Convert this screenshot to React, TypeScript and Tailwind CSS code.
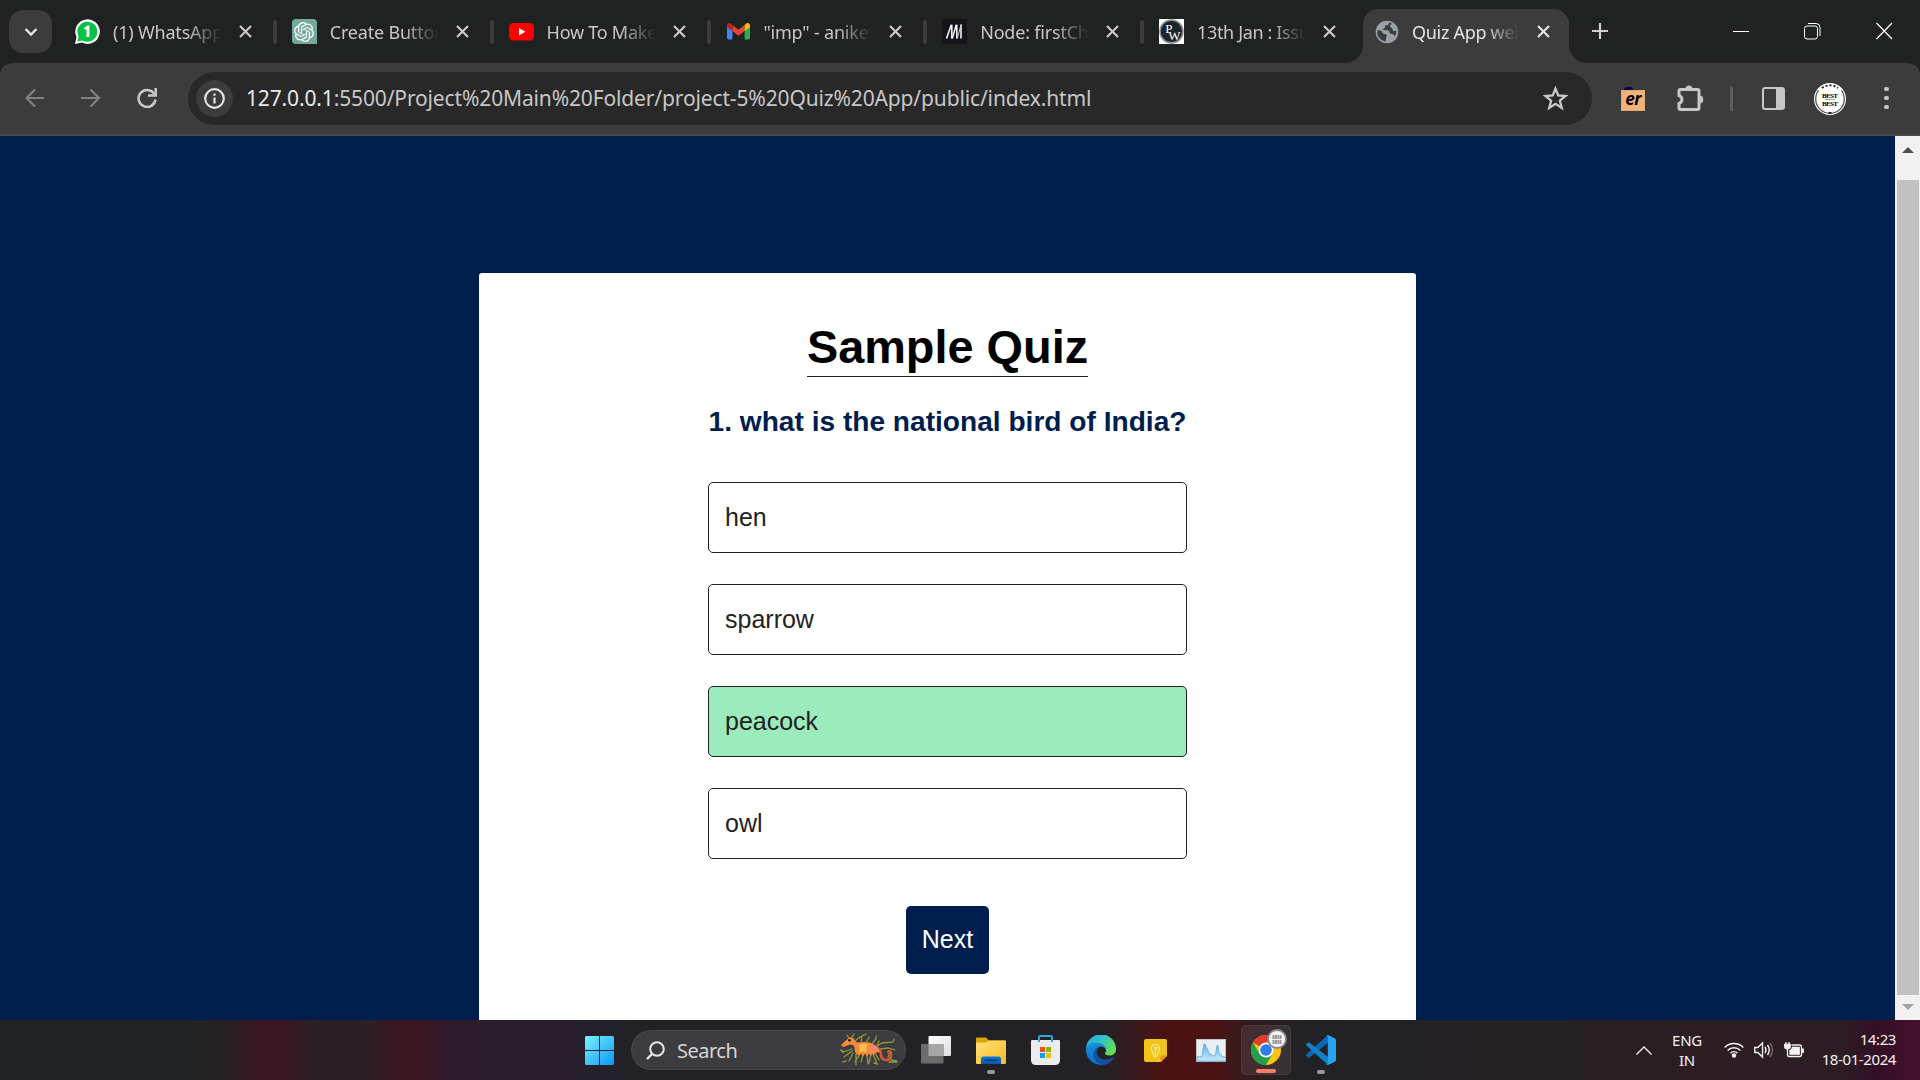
import React from "react";
import { SiOpenai } from "react-icons/si";

type Tab = { title: string; icon: React.ReactNode; spacing: string };

const WhatsAppIcon = () => (
  <svg viewBox="0 0 25 25" className="size-[25px]">
    <path d="M0 25 1.5 18A12.3 12.3 0 1 1 7 23.6Z" fill="#fff" />
    <path d="M2.4 22.6 3.6 17.6A10 10 0 1 1 7.4 21.4Z" fill="#08c146" />
    <path d="M9.3 8.8 12.4 6.6h2V18h-2.9V9.900l-2.2.9Z" fill="#fff" />
  </svg>
);

const ChatIcon = () => (
  <div className="flex size-[25px] items-center justify-center rounded-[4px] rounded-br-none bg-[#75a99c]">
    <SiOpenai className="size-[20px] text-white" />
  </div>
);

const YouTubeIcon = () => (
  <svg viewBox="0 0 25 25" className="size-[25px]">
    <rect y="4" width="25" height="17.5" rx="4.5" fill="#f00" />
    <path d="M10 9v7.400l6.300-3.700Z" fill="#fff" />
  </svg>
);

const GmailIcon = () => (
  <svg viewBox="0 0 25 25" className="ml-px size-[25px]">
    <path d="M1 7v11.500q0 2 2 2h3.400V9.500Z" fill="#4285f4" />
    <path d="M18.600 9.500v11H22q2 0 2-2V7Z" fill="#34a853" />
    <path d="M6.400 6 12.500 10.800 18.600 6v6L12.500 16.700 6.400 12Z" fill="#ea4335" />
    <path d="M1 6.800Q1 4 3.600 4q1 0 2.800 2v6L1 8.300Z" fill="#c5221f" />
    <path d="M24 6.800Q24 4 21.400 4q-1 0-2.800 2v6L24 8.300Z" fill="#fbbc04" />
  </svg>
);

const MdnIcon = () => (
  <svg viewBox="0 0 25 25" className="size-[25px]">
    <rect width="25" height="25" fill="#15141a" />
    <path d="M4.500 19.500 9.300 5.800M14.300 5.800 10.200 19.500" stroke="#fff" strokeWidth="1.500" />
    <path d="M9.800 5.800v13.700M14.800 5.800v13.700M19 5.500v14" stroke="#fff" strokeWidth="1.500" />
    <path d="m15.300 19.500 3.700-13.700" stroke="#d5d5d5" strokeWidth="1" />
  </svg>
);

const PwIcon = () => (
  <svg viewBox="0 0 25 25" className="size-[25px]">
    <rect width="25" height="25" fill="#fff" />
    <circle cx="12.500" cy="12.500" r="11.400" fill="#1d2429" stroke="#8b8f92" strokeWidth="1.600" />
    <text x="6.300" y="13.800" fontSize="13" fill="#fff" fontFamily="Liberation Serif, serif">P</text>
    <text x="9.300" y="21" fontSize="13" fill="#fff" fontFamily="Liberation Serif, serif">W</text>
  </svg>
);

const GlobeIcon = () => (
  <svg viewBox="0 0 24 24" className="size-[24px]">
    <circle cx="12" cy="12" r="11.300" fill="#9aa0a6" />
    <path
      d="M2.500 10.200c2.600.2 3.800.2 4.600 1.600.9 1.300.3 2.200 2 2.200 1.500.1 2.800.4 2.800 1.800s-1 1.300-1 2.600v3c-4.700-.5-8.200-4.100-8.700-8.600ZM14 2.600c-.1 1.700-.4 2.600-2.100 2.700-1.700 0-2 .6-2 1.900s-1 1.500-2.200 1.500c0 1.500 1.300 1.600 3.500 1.600s3 .6 3.200 2c.2 1.200 1.100 1.600 2.500 1.600 1.700 0 2.500.9 2.300 2.400 1.600-1.200 2.400-3.500 2.300-5.500-1.500.6-3.200.5-3.800-.8-.5-1.200-.1-2-1.400-2.200-1.500-.3-1.700-1.900-.7-2.700.8-.7 1-1.200.7-2Z"
      fill="#3c3c3c"
    />
  </svg>
);

const CloseIcon = ({ className }: { className: string }) => (
  <svg viewBox="0 0 13 13" className={"size-[13px] shrink-0 " + className}>
    <path d="m1 1 11 11M12 1 1 12" stroke="currentColor" strokeWidth="2.2" />
  </svg>
);

const tabs: Tab[] = [
  { title: "(1) WhatsApp", icon: <WhatsAppIcon />, spacing: "tracking-[-0.2px]" },
  { title: "Create Button", icon: <ChatIcon />, spacing: "tracking-[-0.2px]" },
  { title: "How To Make", icon: <YouTubeIcon />, spacing: "tracking-[-0.25px]" },
  { title: "\"imp\" - aniket", icon: <GmailIcon />, spacing: "tracking-[-0.2px]" },
  { title: "Node: firstChild", icon: <MdnIcon />, spacing: "tracking-[-0.2px]" },
  { title: "13th Jan : Issue", icon: <PwIcon />, spacing: "tracking-[-0.35px]" },
];

const TabTitle = ({ title, className }: { title: string; className: string }) => (
  <div
    className={
      "ml-[13px] overflow-hidden text-[18px] leading-[30px] whitespace-nowrap [mask-image:linear-gradient(to_right,black_68%,transparent_100%)] " +
      className
    }
  >
    {title}
  </div>
);

const TabStrip = () => (
  <div className="flex h-[63px] bg-[#1f2221]">
    <div className="mt-[10px] ml-[9px] flex size-[43px] items-center justify-center rounded-[14px] bg-[#3c3c3c]">
      <svg viewBox="0 0 14 10" className="h-[10px] w-[14px]">
        <path d="m1.500 2 5.500 5.500L12.500 2" fill="none" stroke="#e8e8e8" strokeWidth="2.400" />
      </svg>
    </div>
    <div className="ml-[8px] flex w-[1302px]">
      {tabs.map((t, i) => (
        <div key={t.title} className="flex h-[63px] w-[216.8px] shrink-0 items-center pl-[15px]">
          <div className="w-[25px] shrink-0">{t.icon}</div>
          <TabTitle title={t.title} className={"w-[109px] shrink-0 text-[#c7c8c7] " + t.spacing} />
          <CloseIcon className="ml-[17px] text-[#c9cac9]" />
          {i < 5 && <div className="ml-[21px] h-[24px] w-[4px] shrink-0 rounded-full bg-[#3c3c3c]" />}
        </div>
      ))}
    </div>
    <div className="relative mt-[9px] ml-px flex h-[54px] w-[206px] items-center rounded-t-[15px] bg-[#3c3c3c] pb-[9px] pl-[12px]">
      <svg viewBox="0 0 18 18" className="absolute bottom-0 -left-[18px] size-[18px]">
        <path d="M18 0A18 18 0 0 1 0 18H18Z" fill="#3c3c3c" />
      </svg>
      <svg viewBox="0 0 18 18" className="absolute -right-[18px] bottom-0 size-[18px]">
        <path d="M0 0A18 18 0 0 0 18 18H0Z" fill="#3c3c3c" />
      </svg>
      <GlobeIcon />
      <TabTitle title="Quiz App web" className="w-[107px] tracking-[-0.3px] text-[#e3e3e3]" />
      <CloseIcon className="ml-[18px] text-[#e3e3e3]" />
    </div>
    <svg viewBox="0 0 16 16" className="mt-[23px] ml-[23px] size-[16px]">
      <path d="M8 0v16M0 8h16" stroke="#cfcfcf" strokeWidth="2.200" />
    </svg>
    <div className="mt-[22px] mr-[27px] ml-auto flex h-[18px] gap-[55px]">
      <svg viewBox="0 0 17 18" className="h-[18px] w-[17px]">
        <path d="M1 9.500h16" stroke="#fff" />
      </svg>
      <svg viewBox="0 0 17 18" className="h-[18px] w-[17px]" fill="none" stroke="#fff">
        <rect x=".5" y="4" width="13" height="13" rx="2.500" />
        <path d="M4 1.500h8q4 0 4 4v8.500" />
      </svg>
      <svg viewBox="0 0 17 18" className="h-[18px] w-[17px]">
        <path d="m.5 1 15.500 16M16 1 .5 17" stroke="#fff" strokeWidth="1.200" />
      </svg>
    </div>
  </div>
);

const Toolbar = () => (
  <div className="bg-[#1f2221]">
    <div className="flex h-[73px] items-center rounded-t-[12px] border-b-2 border-[#474947] bg-[#3c3c3c] pl-[25px]">
      <svg viewBox="0 0 20 20" className="-mt-px size-[20px]" fill="none" stroke="#818181" strokeWidth="2.200">
        <path d="M19 10H2M10 1.500 1.500 10l8.500 8.500" />
      </svg>
      <svg viewBox="0 0 20 20" className="-mt-px ml-[36px] size-[20px]" fill="none" stroke="#818181" strokeWidth="2.200">
        <path d="M0 10H17.500M9.500 1.500l8.500 8.500-8.500 8.500" />
      </svg>
      <svg viewBox="0 0 20 20" className="-mt-px ml-[36px] size-[20px]" fill="none" stroke="#c9c9c9" strokeWidth="2.500">
        <path d="M17.200 5.800A8.500 8.500 0 1 0 18.500 11.500" />
        <path d="M18.700 0v7.500H11" />
      </svg>
      <div className="ml-[31px] flex h-[53px] w-[1404px] items-center rounded-full bg-[#282828] pl-[8px]">
        <div className="flex size-[37px] items-center justify-center rounded-full bg-[#3c3c3c]">
          <svg viewBox="0 0 21 21" className="size-[21px]" fill="none" stroke="#e3e3e3">
            <circle cx="10.500" cy="10.500" r="9.300" strokeWidth="2.200" />
            <path d="M10.500 9.500v6M10.500 5.500v2.300" strokeWidth="2.200" />
          </svg>
        </div>
        <div className="-mt-[2px] ml-[13px] text-[21px] leading-[30px] tracking-[-0.14px] whitespace-nowrap text-[#c7c7c7]">
          <span className="text-[#e8e8e8]">127.0.0.1</span>:5500/Project%20Main%20Folder/project-5%20Quiz%20App/public/index.html
        </div>
        <svg viewBox="0 0 24 24" className="mr-[24px] ml-auto size-[25px]" fill="none" stroke="#c9c9c9" strokeWidth="2.200">
          <path d="m12 2.500 2.600 6.600 7.100.5-5.500 4.500 1.800 6.900-6-3.900-6 3.900 1.800-6.900L2.300 9.600l7.100-.5Z" />
        </svg>
      </div>
      <div className="ml-[29px] flex size-[24px] flex-col">
        <div className="ml-[3px] h-[3px] w-[9px] rounded-t-full bg-[#08004f]" />
        <div className="flex h-[21px] items-center justify-center border border-[#e0a873] bg-[#f3b27c] text-[17px] leading-[18px] font-bold tracking-[-0.500px] text-black italic">
          <span className="-mt-[3px]">er</span>
        </div>
      </div>
      <svg viewBox="0 0 28 28" className="-mt-[2px] ml-[32px] size-[28px]">
        <path
          d="M3.500 5.500H20.500q1.500 0 1.500 1.500V24q0 1.500-1.500 1.500H3.500Q2 25.500 2 24v-4.500q3-1.200 3-4T2 11.500V7q0-1.500 1.500-1.500Z"
          fill="none"
          stroke="#c7c7c7"
          strokeWidth="3"
        />
        <path d="M8.500 5a3.500 3.500 0 0 1 7 0ZM22.500 11.500a3.800 4 0 0 1 0 8Z" fill="#c7c7c7" />
      </svg>
      <div className="ml-[25px] h-[25px] w-[3px] rounded-full bg-[#5e5e5e]" />
      <div className="ml-[29px] flex h-[23px] w-[23px] justify-end rounded-[3px] border-[2.500px] border-[#c7c7c7]">
        <div className="h-full w-[7px] bg-[#c7c7c7]" />
      </div>
      <svg viewBox="0 0 34 34" className="ml-[28px] size-[34px]">
        <circle cx="17" cy="17" r="16" fill="#fff" />
        <circle cx="17" cy="17" r="14.300" fill="none" stroke="#555" strokeWidth="1.300" />
        <path d="M7 9.500a13 13 0 0 1 20 0" stroke="#fff" strokeWidth="6.500" fill="none" />
        <path d="M9 6a13.500 13.500 0 0 1 16 0" stroke="#222" strokeWidth="2" strokeDasharray="2 2" fill="none" />
        <path d="M15.500 31h3" stroke="#222" strokeWidth="2" />
        <text x="17" y="15.800" fontSize="7" fontWeight="bold" textAnchor="middle" fontFamily="Liberation Serif, serif" textLength="16">BEST</text>
        <text x="17" y="23.800" fontSize="7" fontWeight="bold" textAnchor="middle" fontFamily="Liberation Serif, serif" textLength="16">BEST</text>
        <path d="M12 17.500h10" stroke="#999" />
      </svg>
      <div className="-mt-px ml-[37px] flex flex-col gap-[4.500px]">
        <div className="size-[4.500px] rounded-full bg-[#c7c7c7]" />
        <div className="size-[4.500px] rounded-full bg-[#c7c7c7]" />
        <div className="size-[4.500px] rounded-full bg-[#c7c7c7]" />
      </div>
    </div>
  </div>
);

const options = ["hen", "sparrow", "peacock", "owl"];

const Quiz = () => (
  <div className="flex h-[884px] bg-[#001e4d] font-['Liberation_Sans',sans-serif]">
    <div className="flex flex-1 justify-center pt-[137px]">
      <div className="flex h-[747px] w-[937px] flex-col items-center rounded-t-[3px] bg-white pt-[47px]">
        <h1 className="h-[57px] border-b border-[#1a1f2b] text-[46.875px] leading-[54px] font-bold text-black">Sample Quiz</h1>
        <h2 className="mt-[29px] text-[28.125px] leading-[32px] font-bold whitespace-nowrap text-[#001e4d]">
          1. what is the national bird of India?
        </h2>
        <div className="mt-[44px] flex w-[479px] flex-col gap-[31px]">
          {options.map((o) => (
            <div
              key={o}
              className={
                "flex h-[71px] items-center rounded-[5px] border border-[#222] px-[16px] text-[25px] leading-[29px] text-[#222] " +
                (o === "peacock" ? "bg-[#9cebbc]" : "bg-white")
              }
            >
              {o}
            </div>
          ))}
        </div>
        <button className="mt-[47px] h-[68px] w-[83px] rounded-[5px] bg-[#001e4d] pb-[2px] text-[25px] leading-[29px] text-white">
          Next
        </button>
      </div>
    </div>
    <div className="flex w-[25px] flex-col items-center bg-[#f1f1f1]">
      <svg viewBox="0 0 12 6" className="mt-[11px] h-[6px] w-[12px]">
        <path d="M0 6 6 0l6 6Z" fill="#505050" />
      </svg>
      <div className="mt-[27px] h-[815px] w-[22px] bg-[#c1c1c1]" />
      <svg viewBox="0 0 12 6" className="mt-[9px] h-[6px] w-[12px]">
        <path d="m0 0 6 6 6-6Z" fill="#a3a3a3" />
      </svg>
    </div>
  </div>
);

const WindowsLogo = () => (
  <svg viewBox="0 0 29 29" className="size-[29px]">
    <defs>
      <linearGradient id="win" x1="0" y1="0" x2="29" y2="29" gradientUnits="userSpaceOnUse">
        <stop offset="0" stopColor="#7af4fc" />
        <stop offset="1" stopColor="#0c95f8" />
      </linearGradient>
    </defs>
    <path d="M1 0h13v14H0V1ZM15 0h13l1 1v13H15ZM0 15h14v14H1l-1-1ZM15 15h14v13l-1 1H15Z" fill="url(#win)" />
  </svg>
);

const SeaDragon = () => (
  <svg viewBox="0 0 58 34" className="h-[34px] w-[58px]" fill="none">
    <g stroke="#8c9a38" strokeWidth="1.300" strokeLinecap="round">
      <path d="M9 5 7 2M12 4l2-3M15 8l5-4 2 0M21 10l1-7 4-2M26 10l3-6M31 12l5-6 0-3M36 14l6-4 11-1 1-3M40 16l8-1 7 2M37 12l2-4" />
      <path d="M12 16 3 19M12 18l-8 6M13 20l-4 8M16 21l0 11M20 21l-5 8M23 22l-2 7M27 22l1 9M31 21l-2 9M33 21l4 10M35 20l4 7M48 24l2-5M51 27l6 1M49 29l8 0" />
      <path d="m3 19-2-2M6 28l-3 1M37 31l-3-1" stroke="#c2a344" />
    </g>
    <path d="M34 13q7 3 7 8 0 6 5 6t5-5-3-3" stroke="#dc5636" strokeWidth="2.600" strokeLinecap="round" />
    <path
      d="M1 12 7.500 6Q11 2.500 14 6q1 4 6 3.500 8-1.500 14 2 5 3 6 8-5-1-6 3l-2-2-1 3-2-3-2 3-2-3-2 3-2-3-2 2q-5-2-4.500-8-1-3-4-3L3 14Z"
      fill="#f58b38"
    />
    <path d="M19 11.500q4-1.500 8-.5l-1 9-3-2-3 2Z" fill="#ffbd4e" />
    <path d="M31 12q5 0 8 5-4-1-7 2Z" fill="#e9848a" />
    <circle cx="9.500" cy="7.300" r="1.400" fill="#2b1708" />
  </svg>
);

const TaskViewIcon = () => (
  <svg viewBox="0 0 30 28" className="h-[28px] w-[30px]">
    <defs>
      <linearGradient id="tvw" x1="0" y1="0" x2="1" y2="1">
        <stop offset="0" stopColor="#fff" />
        <stop offset="1" stopColor="#dcdcdc" />
      </linearGradient>
    </defs>
    <rect x="7.500" y="0" width="22.500" height="20" rx="1" fill="url(#tvw)" />
    <rect x="0" y="8" width="22.500" height="19.500" rx="1" fill="#6c6c6c" />
    <path d="M7.500 8h15v12h-15Z" fill="#a6a6a6" />
  </svg>
);

const ExplorerIcon = () => (
  <svg viewBox="0 0 30 27" className="h-[27px] w-[30px]">
    <defs>
      <linearGradient id="fold" x1="0" y1="0" x2="1" y2="1">
        <stop offset="0" stopColor="#ffe07a" />
        <stop offset="1" stopColor="#fdbb22" />
      </linearGradient>
      <linearGradient id="foldb" x1="0" y1="0" x2="0" y2="1">
        <stop offset="0" stopColor="#0a7bd8" />
        <stop offset="1" stopColor="#0a55a5" />
      </linearGradient>
    </defs>
    <path d="M0 8V1.500Q0 .5 1 .5h9l3 3h16q1 0 1 1V8Z" fill="#e0a008" />
    <path d="M0 5.500h10l3-2h16q1 0 1 1V26q0 1-1 1H1q-1 0-1-1Z" fill="url(#fold)" />
    <path d="M5 27v-5q0-2.500 2.500-2.500h15q2.500 0 2.500 2.500v5Z" fill="url(#foldb)" />
    <path d="M8.500 23.200h13" stroke="#06386f" strokeWidth="1.400" />
  </svg>
);

const StoreIcon = () => (
  <svg viewBox="0 0 29 30" className="mr-[2px] h-[30px] w-[29px]">
    <path d="M8 7V2q0-1 1-1h11q1 0 1 1v5" fill="none" stroke="#25a9e0" strokeWidth="2" />
    <path d="M0 6q0-1 1-1h27q1 0 1 1v19q0 5-5 5H5q-5 0-5-5Z" fill="#ececec" />
    <path d="M8 5v2M21 5v2" stroke="#25a9e0" strokeWidth="2" />
    <path d="M9 12h5v5H9Z" fill="#f25022" />
    <path d="M15 12h5v5h-5Z" fill="#7fba00" />
    <path d="M9 18h5v5H9Z" fill="#00a4ef" />
    <path d="M15 18h5v5h-5Z" fill="#ffb900" />
  </svg>
);

const EdgeIcon = () => (
  <svg viewBox="0 0 30 30" className="size-[30px]">
    <defs>
      <linearGradient id="edgeTop" x1="0" y1="0" x2="1" y2=".6">
        <stop offset="0" stopColor="#2aa5dc" />
        <stop offset=".5" stopColor="#2fc3c8" />
        <stop offset="1" stopColor="#62e04e" />
      </linearGradient>
      <linearGradient id="edgeLeft" x1="0" y1="0" x2="0" y2="1">
        <stop offset="0" stopColor="#1a8fdd" />
        <stop offset="1" stopColor="#0a6cc8" />
      </linearGradient>
    </defs>
    <path d="M0 14a15 15 0 0 1 30 .5c0 4-3 6-6.500 6-3 0-4.500-1-4.500-2s1-1.500 1-3.500c0-3-3-6-8-6-6 0-10 3-12 5Z" fill="url(#edgeTop)" />
    <path d="M0 15c0-4 4-7.500 10-7.500 7 0 10 4 10 7.500-1-2-3-3.500-5-3.500-3 0-5 3-5 6.500 0 5 4 10 9 11.500Q17 30 15 30A15 15 0 0 1 0 15Z" fill="url(#edgeLeft)" />
    <path d="M13 12c-2 2-3 6-1 9 3 4 9 4.500 15 1.500 1-.3 1 .3.500 1A15 15 0 0 1 17 30C10 28 7 23 7.500 18.500 8 15 10 12.500 13 12Z" fill="#10509c" />
  </svg>
);

const NotesIcon = () => (
  <svg viewBox="0 0 23 23" className="mr-px size-[23px]">
    <path d="M0 2q0-2 2-2h19q2 0 2 2v15l-6 6H2q-2 0-2-2Z" fill="#f0c419" />
    <path d="M23 16.500 16.500 23v-4.500q0-2 2-2Z" fill="#ee8c1c" />
    <path d="M11.500 5.500q4 0 4 3.800 0 2.500-3 8.200h-2Q7.500 11.800 7.500 9.300q0-3.800 4-3.800ZM10.500 8.500h2.500l-1.500 3ZM11.500 11v5" fill="none" stroke="#fbeaa0" strokeWidth="1.100" />
  </svg>
);

const MonitorIcon = () => (
  <svg viewBox="0 0 30 23" className="h-[23px] w-[30px]">
    <defs>
      <linearGradient id="mon" x1="0" y1="0" x2="0" y2="1">
        <stop offset="0" stopColor="#5fb4ea" />
        <stop offset="1" stopColor="#c8e9fc" />
      </linearGradient>
    </defs>
    <rect x=".5" y=".5" width="29" height="22" fill="#eceff2" stroke="#bfc5cb" />
    <path d="M1 17.500 5 18l1-1.500L8 5l1 0 1.500 4 1 1 2 6 1.500-1 1 2 3-.5 1-3 1-7 1 0 1 7 2 2 1 3 1-1 3 1V22H1Z" fill="url(#mon)" stroke="#4ba5de" strokeWidth=".7" />
  </svg>
);

const ChromeIcon = () => (
  <svg viewBox="0 0 30 30" className="size-[30px]">
    <circle cx="15" cy="15" r="15" fill="#fbc116" />
    <path d="M15 15 2 7.500A15 15 0 0 1 28 7.500H15Z" fill="#e33b2e" />
    <path d="M2 7.500A15 15 0 0 0 15 30l6.500-11.300L15 22.500 8.500 18.700Z" fill="#22a04b" />
    <circle cx="15" cy="15" r="7.500" fill="#fff" />
    <circle cx="15" cy="15" r="5.800" fill="#2f7de9" />
  </svg>
);

const CodeIcon = () => (
  <svg viewBox="0 0 30 30" className="size-[30px]">
    <path d="M22 0 22 8 3.500 22.300Q2.500 23 1.700 22.200L.5 21Q-.3 20 .6 19.200Z" fill="#0a6ab6" />
    <path d="M22 30 22 22 3.500 7.700Q2.500 7 1.700 7.800L.5 9Q-.3 10 .6 10.800Z" fill="#0f80cc" />
    <path d="m22 0 6.800 3.200Q30 3.800 30 5v20q0 1.200-1.200 1.800L22 30q-1.300.3-2-.6 1.800.4 1.800-1.400V2Q21.800.2 20 .6q.7-.9 2-.6Z" fill="#27a3ee" />
  </svg>
);

const apps: { name: string; icon: React.ReactNode; mark?: string }[] = [
  { name: "view", icon: <TaskViewIcon /> },
  { name: "files", icon: <ExplorerIcon />, mark: "w-[8px] bg-[#97989a]" },
  { name: "store", icon: <StoreIcon /> },
  { name: "edge", icon: <EdgeIcon /> },
  { name: "notes", icon: <NotesIcon /> },
  { name: "monitor", icon: <MonitorIcon /> },
  { name: "chrome", icon: <ChromeIcon />, mark: "w-[20px] bg-[#f77f62]" },
  { name: "code", icon: <CodeIcon />, mark: "w-[8px] bg-[#97989a]" },
];

const Taskbar = () => (
  <div className="flex h-[60px] items-center bg-[linear-gradient(to_right,#202223_0px,#202223_195px,#2c1f22_235px,#3b1724_262px,#3b1724_285px,#2a2127_320px,#2a2127_365px,#3b1721_395px,#3b1721_420px,#301b2e_450px,#271e2e_520px,#271e2e_565px,#222226_630px,#222226_1100px,#361b1d_1133px,#4b1211_1165px,#4b1211_1215px,#361b1d_1242px,#222226_1300px,#222226_1330px,#251f21_1600px,#2e1d24_1720px,#2c1d24_1840px,#340f26_1880px,#46102f_1920px)] pl-[585px] text-[#f3f3f3]">
    <WindowsLogo />
    <div className="ml-[17px] flex h-[40px] w-[275px] items-center rounded-full border border-white/5 bg-white/12 pl-[14px]">
      <svg viewBox="0 0 19 19" className="size-[19px]" fill="none" stroke="#e8e8e8" strokeWidth="2">
        <circle cx="11" cy="8" r="6.800" />
        <path d="M6 13 1 18" strokeWidth="2.400" />
      </svg>
      <span className="mt-[2px] ml-[12px] text-[20px] leading-[30px] tracking-[-0.500px] text-[#d6d6d6]">Search</span>
      <div className="mr-[7px] ml-auto">
        <SeaDragon />
      </div>
    </div>
    <div className="ml-[2.500px] flex">
      {apps.map((a) => (
        <div key={a.name} className="flex h-[60px] w-[55px] items-center justify-center">
          <div
            className={
              "relative flex h-[50px] w-[50px] items-center justify-center rounded-[5px] " +
              (a.name === "chrome" ? "border border-white/6 bg-white/8" : "")
            }
          >
            {a.icon}
            {a.name === "chrome" && (
              <svg viewBox="0 0 20 20" className="absolute top-[3px] right-[3px] size-[20px]">
                <circle cx="10" cy="10" r="9" fill="#f2f2f2" stroke="#888" strokeWidth="1.800" />
                <path d="M5.500 7h9M5.500 9h9M5.500 12h9M5.500 14h9" stroke="#777" strokeWidth="1.300" strokeDasharray="2 .5" />
              </svg>
            )}
            {a.mark && <div className={"absolute bottom-[1px] h-[4px] rounded-full " + a.mark} />}
          </div>
        </div>
      ))}
    </div>
    <div className="mr-[24px] ml-auto flex items-center">
      <svg viewBox="0 0 16 9" className="h-[9px] w-[16px]" fill="none" stroke="#f3f3f3" strokeWidth="1.300">
        <path d="m.5 8.500 7.500-7.500 7.500 7.500" />
      </svg>
      <div className="ml-[17px] w-[36px] text-center text-[15px] leading-[20px] tracking-[-0.300px]">
        <div>ENG</div>
        <div>IN</div>
      </div>
      <svg viewBox="0 0 20 16" className="ml-[19px] h-[16px] w-[20px]" fill="none" stroke="#f3f3f3" strokeWidth="1.500">
        <path d="M.7 5.500a13 13 0 0 1 18.600 0M3.600 8.500a9 9 0 0 1 12.800 0M6.500 11.200a5 5 0 0 1 7 0" />
        <circle cx="10" cy="13.500" r="1.500" fill="#f3f3f3" />
      </svg>
      <svg viewBox="0 0 20 18" className="ml-[10px] size-[20px]" fill="none" stroke="#f3f3f3" strokeWidth="1.400">
        <path d="M.8 6.500h3L8.500 2v14l-4.700-4.500h-3Z" />
        <path d="M11 6q2 3 0 6M13.500 4q3.500 5 0 10" />
        <path d="M16 2q5 7 0 14" stroke="#77696e" />
      </svg>
      <svg viewBox="0 0 20 16" className="ml-[10px] h-[16px] w-[20px]" fill="none" stroke="#f3f3f3" strokeWidth="1.300">
        <path d="M7.500 3h8q2 0 2 2v7.500q0 2-2 2H5q-1.500 0-1.500-1.500V7" />
        <path d="M8.500 5.300h6.700v6.900H6V8.500q2.500-1 2.500-3.200Z" fill="#f3f3f3" />
        <path d="M18.900 6.500v4.500" strokeWidth="2" />
        <path d="M.7 2.300h5.500V5q0 1.700-2.700 1.700T.7 5ZM2 0v2M5 0v2" fill="#f3f3f3" />
      </svg>
      <div className="ml-[12px] w-[80px] text-right text-[15px] leading-[20px] tracking-[-0.400px]">
        <div className="-mt-[2px]">14:23</div>
        <div>18-01-2024</div>
      </div>
    </div>
  </div>
);

export default function App() {
  return (
    <div className="flex h-[1080px] w-[1920px] flex-col overflow-hidden font-['Noto_Sans',sans-serif]">
      <TabStrip />
      <Toolbar />
      <Quiz />
      <Taskbar />
    </div>
  );
}
